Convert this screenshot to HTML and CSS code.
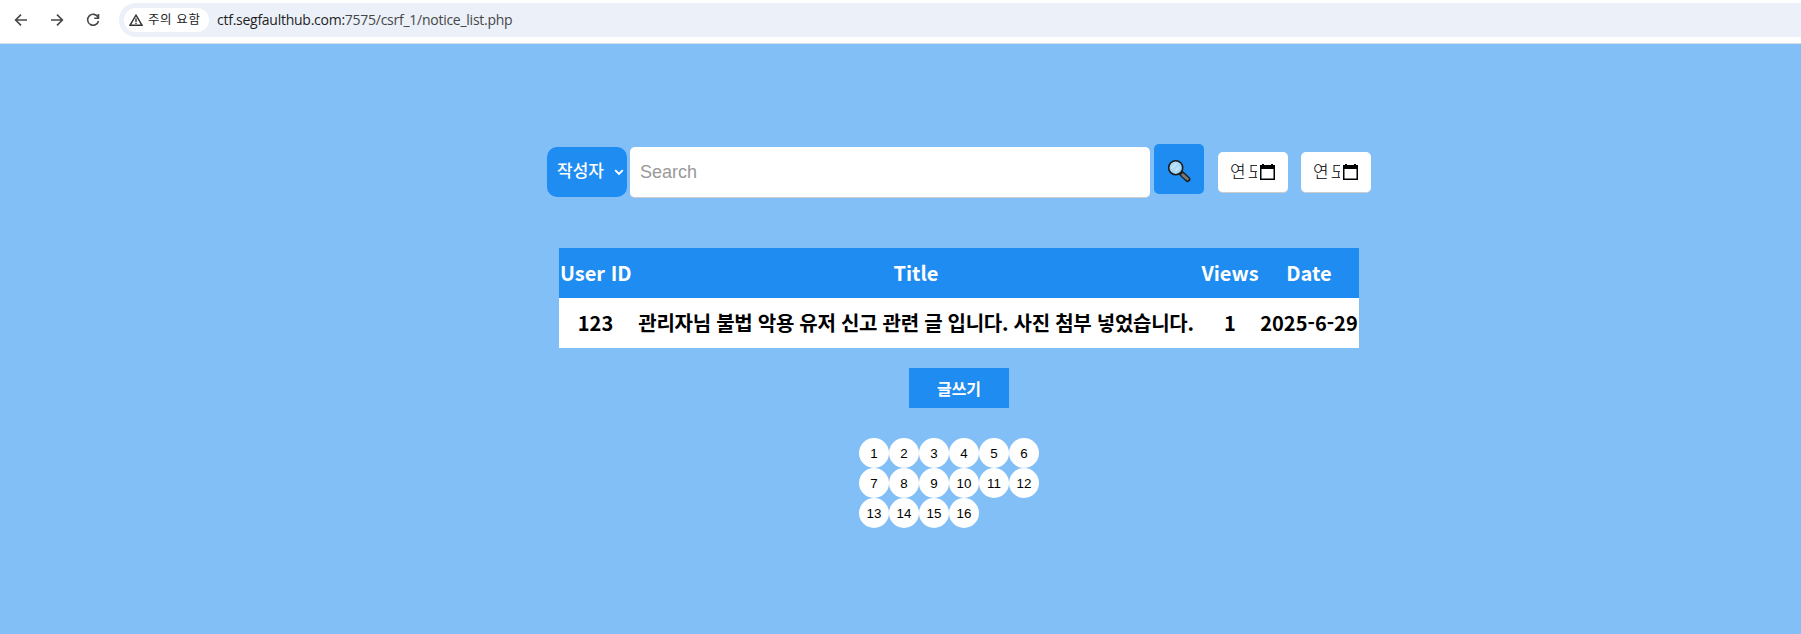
FILE: index.html
```html
<!DOCTYPE html>
<html lang="ko">
<head>
<meta charset="utf-8">
<title>notice_list</title>
<link rel="stylesheet" href="styles.css">
</head>
<body>
<header class="toolbar">
  <svg class="nav" viewBox="0 0 16 16"><path d="M14 8H2.8M8 2.6L2.6 8L8 13.4"/></svg>
  <svg class="nav" viewBox="0 0 16 16"><path d="M2 8h11.2M8 2.6L13.4 8L8 13.4"/></svg>
  <svg class="nav" viewBox="0 0 16 16"><path d="M13 5.2A5.5 5.5 0 1 0 13.5 9M13.5 2v4.2H9.3"/></svg>
  <div class="address">
    <div class="chip">
      <svg class="warn" viewBox="0 0 14 12"><path d="M7 1.2L13 11.3H1z"/><path d="M7 4.5v3.4M7 8.7v1.3"/></svg>
      <span class="chip-text">주의 요함</span>
    </div>
    <div class="url"><span class="host">ctf.segfaulthub.com:</span>7575/csrf_1/notice_list.php</div>
  </div>
</header>
<main class="page">
  <form class="search">
    <div class="select"><span class="select-text">작성자</span><svg class="chevron" viewBox="0 0 10 7"><path d="M1.2 1.2L5 5L8.8 1.2"/></svg></div>
    <div class="field">Search</div>
    <div class="go"><svg class="lens" viewBox="0 0 24 24"><path class="grip-edge" d="M15.3 15.3L20.6 20.2"/><path class="grip" d="M15.8 15.8L20.4 20"/><circle class="glass" cx="8.7" cy="8.7" r="7"/><path class="shine" d="M4.5 9.5L9.5 4.5M8 12L12 8"/></svg></div>
    <div class="date"><span class="date-text">연도</span><svg class="cal" viewBox="0 0 15 16"><path d="M2 0h2v1h7V0h2v1h2v15H0V1h2zM1.5 5v9.5h12V5z" fill-rule="evenodd"/></svg></div>
    <div class="date"><span class="date-text">연도</span><svg class="cal" viewBox="0 0 15 16"><path d="M2 0h2v1h7V0h2v1h2v15H0V1h2zM1.5 5v9.5h12V5z" fill-rule="evenodd"/></svg></div>
  </form>
  <div class="table">
    <div class="row head"><div class="user">User ID</div><div>Title</div><div>Views</div><div>Date</div></div>
    <div class="row"><div class="user">123</div><div class="title">관리자님 불법 악용 유저 신고 관련 글 입니다. 사진 첨부 넣었습니다.</div><div>1</div><div>2025-6-29</div></div>
  </div>
  <div class="write">글쓰기</div>
  <nav class="pager">
    <span>1</span><span>2</span><span>3</span><span>4</span><span>5</span><span>6</span>
    <span>7</span><span>8</span><span>9</span><span>10</span><span>11</span><span>12</span>
    <span>13</span><span>14</span><span>15</span><span>16</span>
  </nav>
</main>
</body>
</html>
```

FILE: styles.css
```css
* { box-sizing: border-box; }
body {
  margin: 0;
  height: 634px;
  overflow: hidden;
  background: #83bff7;
  font-family: "Noto Sans CJK KR", sans-serif;
}
.toolbar {
  display: flex;
  height: 44px;
  padding: 3px 0 0 13px;
  background: #fff;
  border-bottom: 1px solid #d5e0ea;
}
.nav {
  width: 16px;
  height: 16px;
  margin: 9px 20px 0 0;
  fill: none;
  stroke: #474747;
  stroke-width: 1.6;
}
.address {
  display: flex;
  align-items: center;
  flex: 1;
  height: 34px;
  margin-left: -2px;
  padding-left: 5px;
  background: #ebf0f9;
  border-radius: 17px 0 0 17px;
}
.chip {
  display: flex;
  align-items: center;
  width: 85px;
  height: 24px;
  padding-left: 5px;
  background: #fff;
  border-radius: 12px;
}
.warn { width: 14px; height: 12px; fill: none; stroke: #333; stroke-width: 1.4; }
.chip-text {
  margin-left: 5px;
  font-size: 12.5px;
  line-height: 22px;
  height: 24px;
  letter-spacing: 0.6px;
  color: #222;
  white-space: nowrap;
}
.url {
  margin-left: 8px;
  font: 14px/34px "Open Sans", sans-serif;
  letter-spacing: -0.26px;
  color: #474747;
  white-space: nowrap;
}
.host { color: #1f1f1f; }
.page { width: 824px; margin-left: 547px; }
.search { display: flex; height: 204px; padding-top: 100px; }
.select {
  display: flex;
  align-items: center;
  width: 80px;
  height: 50px;
  margin: 3px 3px 0 0;
  padding-left: 10px;
  border-radius: 10px;
  background: #1f8cf2;
  color: #fff;
  font-size: 17px;
  white-space: nowrap;
}
.select-text { line-height: 46px; height: 50px; font-weight: 500; }
.chevron { width: 10px; height: 7px; margin-left: 10px; fill: none; stroke: #fff; stroke-width: 1.9; }
.field {
  width: 520px;
  height: 51px;
  margin: 3px 4px 0 0;
  padding-left: 10px;
  border-bottom: 1px solid #ccc;
  border-radius: 5px;
  background: #fff;
  color: #999;
  font: 18px/51px "Liberation Sans", sans-serif;
}
.go {
  width: 50px;
  height: 50px;
  padding: 15px 0 0 13px;
  border-radius: 5px;
  background: #1f8cf2;
}
.lens { display: block; width: 24px; height: 24px; }
.glass { fill: #a9d9f7; stroke: #1c1c1c; stroke-width: 1.6; }
.shine { stroke: #c4e6fb; stroke-width: 2; }
.grip-edge { stroke: #1c1c1c; stroke-width: 5.6; stroke-linecap: round; }
.grip { stroke: #777; stroke-width: 3; stroke-linecap: round; }
.date {
  display: flex;
  width: 70px;
  height: 41px;
  margin: 8px 0 0 14px;
  padding-left: 12px;
  border-bottom: 1px solid #ccc;
  border-radius: 5px;
  background: #fff;
}
.date + .date { margin-left: 13px; }
.date-text {
  width: 27px;
  height: 40px;
  overflow: hidden;
  font-size: 17px;
  line-height: 38px;
  font-weight: 300;
  letter-spacing: 2px;
  color: #000;
  white-space: nowrap;
}
.cal { width: 15px; height: 16px; margin: 12px 0 0 3px; }
.table { width: 800px; margin-left: 12px; }
.row {
  display: grid;
  grid-template-columns: 72px 570px 58px 100px;
  height: 50px;
  background: #fff;
  color: #000;
  font-size: 20px;
  font-weight: 700;
  line-height: 50px;
  text-align: center;
  white-space: nowrap;
}
.user { padding-left: 1px; }
.title { letter-spacing: -0.27px; }
.head { background: #1f8cf2; color: #fff; }
.write {
  width: 100px;
  height: 40px;
  margin: 20px 0 0 362px;
  background: #1f8cf2;
  color: #fff;
  font-size: 16px;
  font-weight: 700;
  line-height: 40px;
  text-align: center;
}
.pager { display: flex; flex-wrap: wrap; width: 200px; margin: 30px 0 0 312px; }
.pager span {
  width: 30px;
  height: 30px;
  border-radius: 50%;
  background: #fff;
  color: #000;
  font: 13.333px/31px "Liberation Sans", sans-serif;
  text-align: center;
}
```
